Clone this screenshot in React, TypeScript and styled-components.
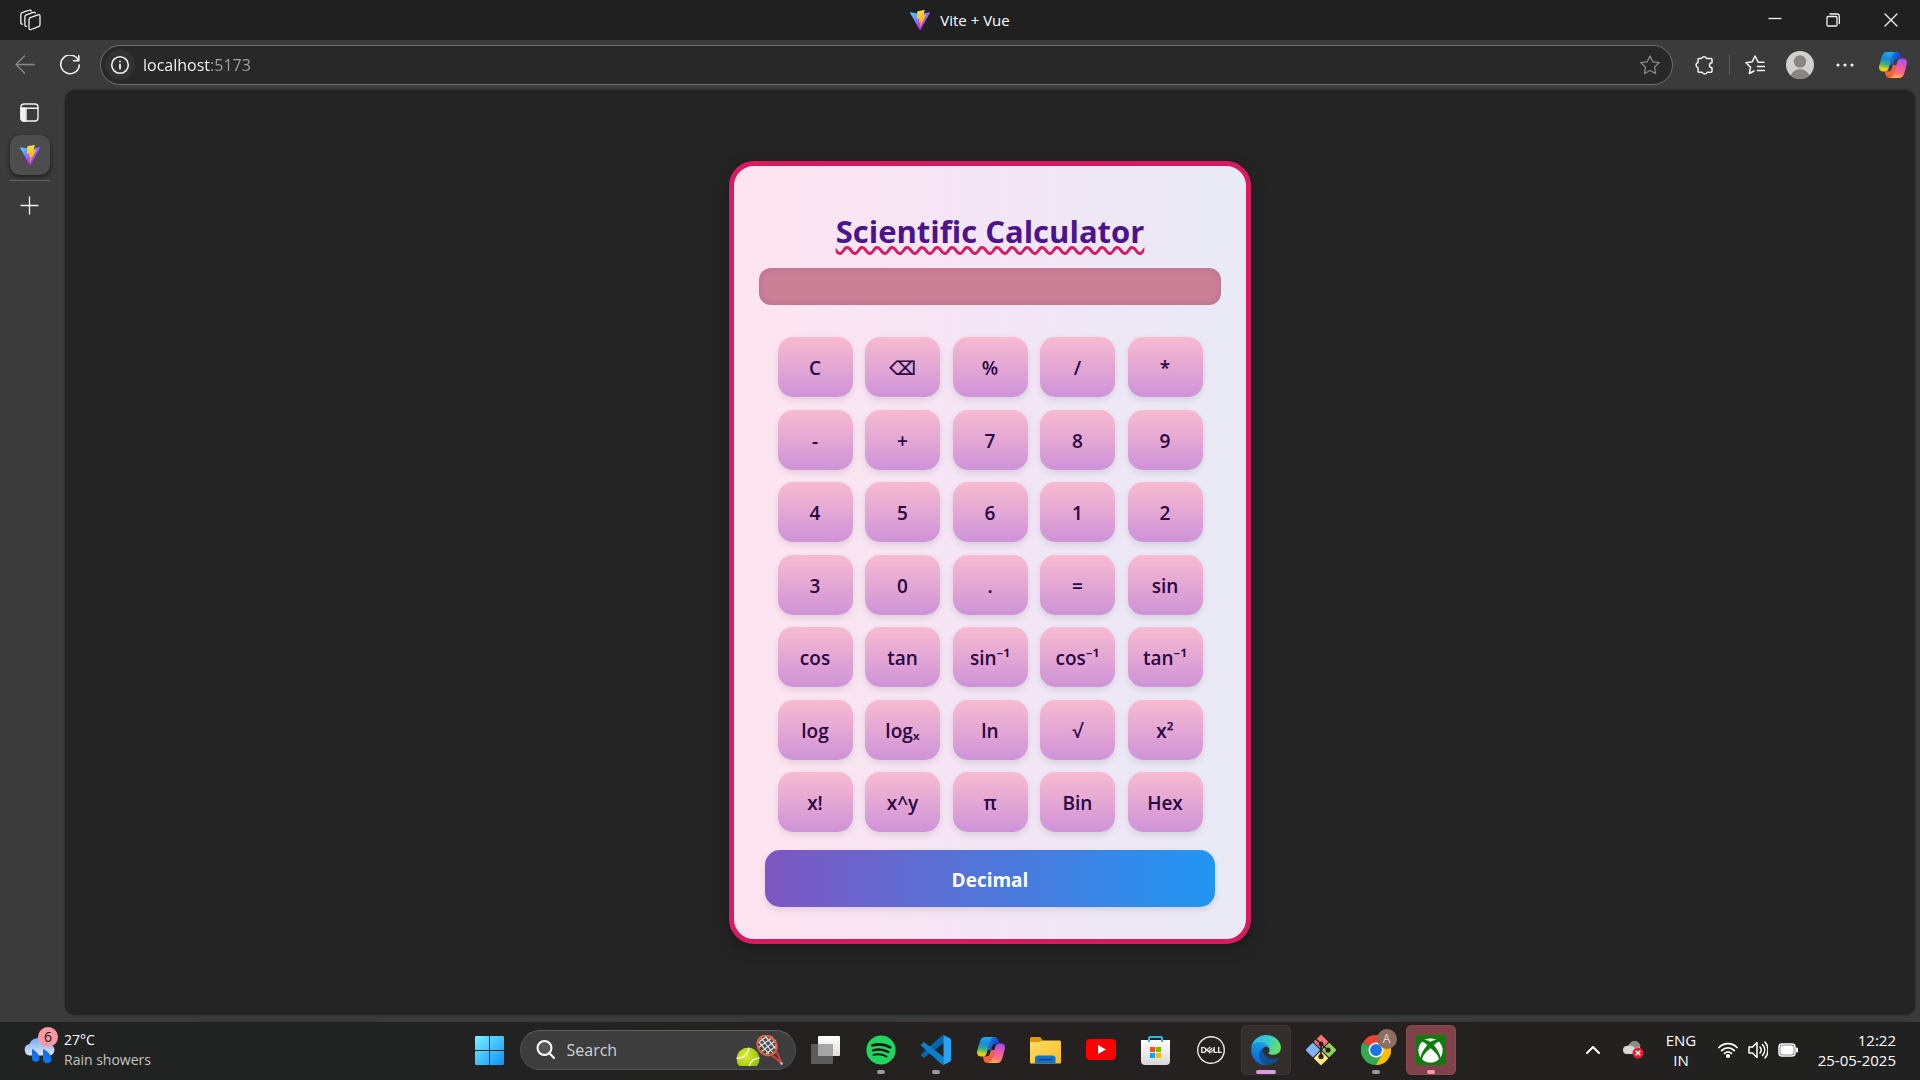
import React, { useId } from "react";
import styled, { createGlobalStyle, css } from "styled-components";
import { SiDell } from "react-icons/si";
import { FaXbox } from "react-icons/fa";

const uiFont = `"Open Sans", "Noto Sans", "DejaVu Sans", sans-serif`;

const GlobalStyle = createGlobalStyle`
  *, *::before, *::after { box-sizing: border-box; }
  body { margin: 0; background: #202020; color: #fff; font-family: ${uiFont}; }
  button, input, output { font-family: inherit; }
  h1, p { margin: 0; }
  svg { display: block; flex: none; }
`;

/* ---------- shared ---------- */

const PlainButton = styled.button`
  display: flex;
  align-items: center;
  justify-content: center;
  padding: 0;
  border: 0;
  background: none;
  color: inherit;
  cursor: pointer;
`;

const IconButton = styled(PlainButton)<{ $width?: number; $dim?: boolean }>`
  flex: none;
  width: ${(p) => p.$width ?? 40}px;
  height: 40px;
  border-radius: 8px;
  color: ${(p) => (p.$dim ? "#8a8a8a" : "#f2f2f2")};
`;

const Line = ({ size = 20, width = 1.3, children }: { size?: number; width?: number; children: React.ReactNode }) => (
  <svg
    width={size}
    height={size}
    viewBox={`0 0 ${size} ${size}`}
    fill="none"
    stroke="currentColor"
    strokeWidth={width}
    strokeLinecap="round"
    strokeLinejoin="round"
    aria-hidden="true"
  >
    {children}
  </svg>
);

const ViteLogo = ({ size = 20 }: { size?: number }) => {
  const id = useId();
  return (
    <svg width={size} height={size} viewBox="0 0 256 257" aria-hidden="true">
      <defs>
        <linearGradient id={`${id}a`} x1="0%" y1="8%" x2="58%" y2="78%">
          <stop offset="0" stopColor="#41d1ff" />
          <stop offset="1" stopColor="#bd34fe" />
        </linearGradient>
        <linearGradient id={`${id}b`} x1="43%" y1="2%" x2="50%" y2="89%">
          <stop offset="0" stopColor="#ffea83" />
          <stop offset="0.08" stopColor="#ffdd35" />
          <stop offset="1" stopColor="#ffa800" />
        </linearGradient>
      </defs>
      <path
        fill={`url(#${id}a)`}
        d="M255.153 37.938 134.897 252.976c-2.483 4.44-8.862 4.466-11.382.048L.875 37.958c-2.746-4.814 1.371-10.646 6.827-9.67l120.385 21.517a6.537 6.537 0 0 0 2.322-.004l117.867-21.483c5.438-.991 9.574 4.796 6.877 9.62Z"
      />
      <path
        fill={`url(#${id}b)`}
        d="M185.432.063 96.44 17.501a3.268 3.268 0 0 0-2.634 3.014l-5.474 92.456a3.268 3.268 0 0 0 3.997 3.378l24.777-5.718c2.318-.535 4.413 1.507 3.936 3.838l-7.361 36.047c-.495 2.426 1.782 4.5 4.151 3.78l15.304-4.649c2.372-.72 4.652 1.36 4.15 3.788l-11.698 56.621c-.732 3.542 3.979 5.473 5.943 2.437l1.313-2.028 72.516-144.72c1.215-2.423-.88-5.186-3.54-4.672l-25.505 4.922c-2.396.462-4.435-1.77-3.759-4.114l16.646-57.705c.677-2.35-1.37-4.583-3.769-4.113Z"
      />
    </svg>
  );
};

const CopilotLogo = () => {
  const id = useId();
  const body = "M8 0h8.500c-2.500.6-3.400 3.300-4.200 6.400L9.900 15.500c-.8 3-2.200 4-4.400 4H4c-3.500 0-4.500-2.700-3.700-6L2.800 4.600C3.700 1.500 5.500 0 8 0Z";
  const fold = "M13.500 0H17c2.800 0 3.700 1.300 4.400 3.600l.9 3.100h-3.400c-2.300 0-3.200.8-3.800 2.800L14 13h-3.500l1.800-7C13 3 13 1 13.500 0Z";
  return (
    <svg width="28" height="26" viewBox="0 0 28 26" aria-hidden="true">
      <defs>
        <linearGradient id={`${id}a`} x1="0.500" y1="0" x2="0.350" y2="1">
          <stop offset="0" stopColor="#1fa8ee" />
          <stop offset="0.350" stopColor="#1a86d8" />
          <stop offset="0.650" stopColor="#3fb37a" />
          <stop offset="0.850" stopColor="#d9d116" />
          <stop offset="1" stopColor="#ffcb00" />
        </linearGradient>
        <linearGradient id={`${id}b`} x1="0.300" y1="1" x2="0.500" y2="0">
          <stop offset="0" stopColor="#a04df2" />
          <stop offset="0.450" stopColor="#ee5aa8" />
          <stop offset="0.750" stopColor="#fb6f83" />
          <stop offset="1" stopColor="#ffb04a" />
        </linearGradient>
        <linearGradient id={`${id}c`} x1="0" y1="0" x2="1" y2="0.500">
          <stop offset="0" stopColor="#1a8be6" />
          <stop offset="1" stopColor="#1b38c4" />
        </linearGradient>
      </defs>
      <path d={fold} fill={`url(#${id}c)`} />
      <path d={fold} fill="#f4633a" transform="rotate(180 14 13)" />
      <path d={body} fill={`url(#${id}a)`} />
      <path d={body} fill={`url(#${id}b)`} transform="rotate(180 14 13)" />
    </svg>
  );
};

/* ---------- browser window ---------- */

const Desktop = styled.div`
  display: flex;
  flex-direction: column;
  min-height: 100vh;
`;

const Browser = styled.div`
  flex: 1;
  display: flex;
  flex-direction: column;
  background: #3b3b3b;
`;

const TitleBar = styled.header`
  display: grid;
  grid-template-columns: 1fr auto 1fr;
  align-items: center;
  height: 40px;
  padding-left: 10px;
  background: #202020;
`;

const WindowTitle = styled.div`
  display: flex;
  align-items: center;
  gap: 10px;
  margin-right: 10px;
  font-size: 15px;
  line-height: 20px;
`;

const WindowControls = styled.div`
  display: flex;
  justify-content: flex-end;
`;

const Toolbar = styled.nav`
  display: flex;
  align-items: center;
  gap: 5px;
  height: 50px;
  padding: 0 4px 0 5px;
`;

const AddressBar = styled.div`
  flex: 1;
  display: flex;
  align-items: center;
  gap: 8px;
  height: 40px;
  margin: 0 6px 0 5px;
  padding: 0 4px;
  border: 1px solid #6e6e6e;
  border-radius: 20px;
  background: #282828;
`;

const SiteInfo = styled(PlainButton)`
  flex: none;
  width: 30px;
  height: 30px;
  border-radius: 50%;
  background: #323232;
  color: #f2f2f2;
`;

const AddressInput = styled.input`
  flex: 1;
  min-width: 0;
  padding: 0;
  border: 0;
  outline: 0;
  font-size: 16px;
  line-height: 24px;
  color: transparent;
  caret-color: #fff;
  background: linear-gradient(90deg, #fff 68px, #a3a3a3 68px);
  background-clip: text;
  -webkit-background-clip: text;
`;

const Separator = styled.span`
  flex: none;
  width: 1px;
  height: 20px;
  background: #5e5e5e;
`;

const Workspace = styled.div`
  flex: 1;
  display: flex;
  padding: 0 5px 6px 0;
`;

const TabStrip = styled.aside`
  flex: none;
  display: flex;
  flex-direction: column;
  gap: 2px;
  width: 65px;
  padding: 3px 15px 0 10px;
`;

const ActiveTab = styled(PlainButton)`
  height: 40px;
  border-radius: 10px;
  background: #4d4d4d;
  box-shadow: 0 2px 5px rgba(0, 0, 0, 0.55);
`;

const TabDivider = styled.hr`
  width: 100%;
  height: 1px;
  margin: 3px 0;
  border: 0;
  background: #636363;
`;

const Page = styled.main`
  flex: 1;
  display: flex;
  align-items: center;
  justify-content: center;
  border-radius: 10px;
  background: #242424;
  box-shadow: 0 0 2px rgba(0, 0, 0, 0.5);
`;

/* ---------- calculator ---------- */

const Card = styled.section`
  display: flex;
  flex-direction: column;
  align-items: center;
  width: 522px;
  padding: 25px 25px 32px;
  border: 5px solid #d81b60;
  border-radius: 25px;
  background: linear-gradient(to right, #ffe4f0, #f3e5f5, #e8eaf6);
  box-shadow: 0 5px 15px rgba(0, 0, 0, 0.3);
`;

const CardTitle = styled.h1`
  margin: 16px 0 13px;
  font-size: 31px;
  line-height: 48px;
  font-weight: 700;
  color: #4a148c;
  text-decoration: underline wavy #d81b60;
  text-decoration-thickness: 3px;
  text-decoration-skip-ink: none;
  text-underline-offset: 3px;
`;

const Display = styled.output`
  align-self: stretch;
  height: 37px;
  border-radius: 12px;
  background: #cc8098;
  box-shadow: inset 0 0 10px rgba(0, 0, 0, 0.12);
`;

const Keypad = styled.div`
  display: grid;
  grid-template-columns: repeat(5, 75px);
  grid-auto-rows: 60px;
  justify-content: space-between;
  align-content: space-between;
  width: 425px;
  min-height: 495px;
  margin: 32px 0 18px;
`;

const keyText = css`
  display: flex;
  align-items: center;
  justify-content: center;
  padding: 2px 0 0;
  border: 0;
  cursor: pointer;
  line-height: 28px;
`;

const Key = styled.button`
  ${keyText}
  border-radius: 15px;
  background: linear-gradient(to bottom, #f8bbd0, #ce93d8);
  box-shadow: 0 3px 6px rgba(0, 0, 0, 0.1);
  font-size: 19px;
  font-weight: 600;
  color: #2a0540;
`;

const ModeButton = styled.button`
  ${keyText}
  width: 450px;
  height: 57px;
  border-radius: 15px;
  background: linear-gradient(to right, #7e57c2, #2196f3);
  box-shadow: 0 3px 6px rgba(0, 0, 0, 0.1);
  font-size: 19px;
  font-weight: 700;
  color: #fff;
`;

const keys = [
  "C", "⌫", "%", "/", "*",
  "-", "+", "7", "8", "9",
  "4", "5", "6", "1", "2",
  "3", "0", ".", "=", "sin",
  "cos", "tan", "sin⁻¹", "cos⁻¹", "tan⁻¹",
  "log", "logₓ", "ln", "√", "x²",
  "x!", "x^y", "π", "Bin", "Hex",
];

const Calculator = () => (
  <Card aria-labelledby="calc-title">
    <CardTitle id="calc-title">Scientific Calculator</CardTitle>
    <Display aria-label="Result" />
    <Keypad>
      {keys.map((k) => (
        <Key key={k} type="button">{k}</Key>
      ))}
    </Keypad>
    <ModeButton type="button">Decimal</ModeButton>
  </Card>
);

/* ---------- taskbar ---------- */

const Taskbar = styled.footer`
  display: grid;
  grid-template-columns: 1fr auto 1fr;
  align-items: center;
  height: 59px;
  padding-bottom: 2px;
  border-top: 1px solid #3a3a3a;
  background: linear-gradient(90deg, #202322, #212221 30%, #252120 55%, #242120 70%, #202120);
`;

const Weather = styled(PlainButton)`
  justify-self: start;
  gap: 9px;
  padding-left: 24px;
`;

const WeatherIcon = styled.span`
  position: relative;
  width: 31px;
  height: 28px;
  padding-top: 2px;
`;

const CountBadge = styled.span`
  position: absolute;
  top: -9px;
  right: -3px;
  width: 20px;
  height: 20px;
  border-radius: 50%;
  background: #ff99a4;
  color: #111;
  font-size: 14px;
  line-height: 20px;
  text-align: center;
`;

const Stack = styled.span<{ $align: string; $size?: number }>`
  display: flex;
  flex-direction: column;
  text-align: ${(p) => p.$align};
  font-size: ${(p) => p.$size ?? 14}px;
  line-height: 20px;
  color: #fff;
`;

const Muted = styled.span`
  color: #c4c4c4;
`;

const Apps = styled.div`
  display: flex;
  align-items: center;
  gap: 5px;
`;

const AppButton = styled(PlainButton)<{ $tone?: "active" | "alert" }>`
  position: relative;
  width: 50px;
  height: 50px;
  border-radius: 6px;
  ${(p) => p.$tone === "active" && "background: #332d2c; box-shadow: inset 0 0 0 1px #3d3836;"}
  ${(p) => p.$tone === "alert" && "background: #7f4248; box-shadow: inset 0 0 0 1px #8a4c52;"}
`;

const Indicator = styled.span<{ $width?: number; $color?: string }>`
  position: absolute;
  bottom: 1px;
  left: 50%;
  width: ${(p) => p.$width ?? 8}px;
  height: 4px;
  border-radius: 2px;
  background: ${(p) => p.$color ?? "#9a9a9a"};
  transform: translateX(-50%);
`;

const ProfileBadge = styled.span`
  position: absolute;
  top: 4px;
  right: 4px;
  width: 20px;
  height: 20px;
  border-radius: 50%;
  background: #8d6e63;
  color: #e4dcd9;
  font-size: 12px;
  line-height: 20px;
  text-align: center;
`;

const SearchBox = styled.label`
  display: flex;
  align-items: center;
  width: 276px;
  height: 40px;
  padding: 0 12px 0 15px;
  border: 1px solid #4e4e4e;
  border-top-color: #606060;
  border-radius: 20px;
  background: #3d3d3d;
`;

const SearchInput = styled.input`
  flex: 1;
  min-width: 0;
  padding: 0 0 0 11px;
  border: 0;
  outline: 0;
  background: none;
  color: #fff;
  font-size: 16px;
  line-height: 24px;
  &::placeholder { color: #d2d2d2; opacity: 1; }
`;

const Tray = styled.div`
  display: flex;
  align-items: center;
  justify-content: flex-end;
  padding-right: 24px;
`;

const TrayButton = styled(PlainButton)<{ $width: number; $end?: boolean }>`
  width: ${(p) => p.$width}px;
  height: 50px;
  gap: 10px;
  justify-content: ${(p) => (p.$end ? "flex-end" : "center")};
`;

const XboxTile = styled.span`
  display: flex;
  align-items: center;
  justify-content: center;
  width: 30px;
  height: 30px;
  border-radius: 2px;
  background: #107c10;
  color: #fff;
`;

const WeatherGlyph = () => (
  <svg width="31" height="26" viewBox="0 0 31 26" aria-hidden="true">
    <defs>
      <linearGradient id="cloud" x1="0" y1="0" x2="0" y2="1">
        <stop offset="0" stopColor="#7aa8f5" />
        <stop offset="1" stopColor="#dbe7fb" />
      </linearGradient>
      <linearGradient id="drop" x1="0" y1="0" x2="0" y2="1">
        <stop offset="0" stopColor="#1b66d8" />
        <stop offset="1" stopColor="#0a7bff" />
      </linearGradient>
    </defs>
    <path fill="url(#cloud)" d="M6 17.500a5.800 5.800 0 0 1-.500-11.500C7 2 10.500 0 15 0c5 0 9 3 10 6.500A5.500 5.500 0 0 1 25 17.500Z" />
    <path fill="url(#drop)" d="M8 11c4 2 7.500 5.500 7.500 9a3.700 3.700 0 0 1-7.500 0Z" />
    <path fill="url(#drop)" d="M19 11c4 2 8.500 5.500 8.500 10a4.200 4.200 0 0 1-8.500 0Z" />
  </svg>
);

const StartGlyph = () => (
  <svg width="29" height="29" viewBox="0 0 29 29" aria-hidden="true">
    <defs>
      <linearGradient id="start" gradientUnits="userSpaceOnUse" x1="0" y1="0" x2="29" y2="29">
        <stop offset="0" stopColor="#79f0ff" />
        <stop offset="1" stopColor="#0a94fb" />
      </linearGradient>
    </defs>
    <path fill="url(#start)" d="M1 0h13v14H0V1a1 1 0 0 1 1-1ZM15 0h13a1 1 0 0 1 1 1v13H15ZM0 15h14v14H1a1 1 0 0 1-1-1ZM15 15h14v13a1 1 0 0 1-1 1H15Z" />
  </svg>
);

const TennisGlyph = () => (
  <svg width="47" height="31" viewBox="0 0 47 31" aria-hidden="true">
    <defs>
      <radialGradient id="ball" cx="0.400" cy="0.350" r="0.700">
        <stop offset="0" stopColor="#dcf02c" />
        <stop offset="1" stopColor="#8fb80a" />
      </radialGradient>
      <clipPath id="ballClip"><circle cx="12" cy="24" r="11.500" /></clipPath>
    </defs>
    <g clipPath="url(#ballClip)">
      <circle cx="12" cy="24" r="11.500" fill="url(#ball)" />
      <path d="M0 23c7 1 12-3 13-11M13 32c1-6 5-9 12-9" fill="none" stroke="#f3fae0" strokeWidth="1.500" />
    </g>
    <g fill="none">
      <ellipse cx="31" cy="10.500" rx="10.500" ry="9" fill="#4a4a4a" transform="rotate(50 31 10.500)" />
      <path d="M23 7l10 12M25 3l12 15M29 1l11 13M34 1l6 7M40 5L25 17M37 2L22 13M41 10l-11 9M31 1l-8 6" stroke="#e2e2e2" strokeWidth="1.200" />
      <ellipse cx="31" cy="10.500" rx="10.500" ry="9" strokeWidth="2" stroke="#e8603e" transform="rotate(50 31 10.500)" />
      <path d="M35 20l10 7M40 15l5 12" strokeWidth="1.600" stroke="#e3402f" />
      <path d="M43 25l2.500 3.500" strokeWidth="3" stroke="#e3402f" />
    </g>
    <circle cx="45.500" cy="28.500" r="1.400" fill="#b9a8e6" />
  </svg>
);

const TaskViewGlyph = () => (
  <svg width="29" height="28" viewBox="0 0 29 28" aria-hidden="true">
    <defs>
      <linearGradient id="tv" x1="0" y1="0" x2="0" y2="1">
        <stop offset="0" stopColor="#ffffff" />
        <stop offset="1" stopColor="#dedede" />
      </linearGradient>
    </defs>
    <rect x="0" y="8" width="22" height="20" rx="1" fill="#5c5c5c" />
    <rect x="7" y="0" width="22" height="20" rx="1" fill="url(#tv)" />
    <rect x="7" y="8" width="15" height="12" fill="#a6a6a6" />
  </svg>
);

const SpotifyGlyph = () => (
  <svg width="30" height="30" viewBox="0 0 30 30" aria-hidden="true">
    <circle cx="15" cy="15" r="14.600" fill="#1ed760" />
    <g fill="none" stroke="#191414" strokeLinecap="round">
      <path d="M6.500 10.400c6-1.600 12.600-1 17.700 2" strokeWidth="2.800" />
      <path d="M7 15.300c5.300-1.400 10.800-.8 15.300 1.800" strokeWidth="2.300" />
      <path d="M7.500 19.800c4.500-1 9-.5 13 1.700" strokeWidth="1.900" />
    </g>
  </svg>
);

const CodeGlyph = () => (
  <svg width="30" height="30" viewBox="0 0 100 100" aria-hidden="true">
    <path fill="#0065a9" d="M75 27.300 12.200 75a4.200 4.200 0 0 1-5.300-.2l-5.500-5a4.200 4.200 0 0 1 0-6.200L68.800 2.100 80 10Z" />
    <path fill="#0b7fcb" d="M75 72.700 12.200 25a4.200 4.200 0 0 0-5.300.2l-5.500 5a4.200 4.200 0 0 0 0 6.200L68.800 97.900 80 90Z" />
    <path fill="#26a3f2" d="M75.900 99.100a6.200 6.200 0 0 1-7.100-1.200c2.300 2.300 6.200.7 6.200-2.600V4.700c0-3.300-3.900-4.900-6.200-2.600a6.200 6.200 0 0 1 7.100-1.200l20.600 9.900a6.200 6.200 0 0 1 3.500 5.600v67.200a6.200 6.200 0 0 1-3.500 5.600Z" />
  </svg>
);

const FolderGlyph = () => (
  <svg width="31" height="27" viewBox="0 0 31 27" aria-hidden="true">
    <defs>
      <linearGradient id="fold" x1="0" y1="0" x2="1" y2="1">
        <stop offset="0" stopColor="#ffdc6b" />
        <stop offset="1" stopColor="#f9bd1f" />
      </linearGradient>
    </defs>
    <path fill="#dc9a06" d="M0 1.500A1.500 1.500 0 0 1 1.500 0H9c1 0 1.500.3 2 .9L13 4v6H0Z" />
    <path fill="url(#fold)" d="M0 5h9.500L13 3.500h16.500A1.500 1.500 0 0 1 31 5v20.500a1 1 0 0 1-1 1H1a1 1 0 0 1-1-1Z" />
    <path fill="#1172c9" d="M5 21.500a3 3 0 0 1 3-3h14.500a3 3 0 0 1 3 3v5H5Z" />
    <path stroke="#0b3f78" strokeWidth="1.200" d="M9 22.500h13" />
  </svg>
);

const YouTubeGlyph = () => (
  <svg width="30" height="22" viewBox="0 0 30 22" aria-hidden="true">
    <rect width="30" height="21" rx="4" fill="#f00" />
    <path fill="#fff" d="M12 6v9l8-4.500Z" />
  </svg>
);

const StoreGlyph = () => (
  <svg width="29" height="29" viewBox="0 0 29 29" aria-hidden="true">
    <defs>
      <linearGradient id="bag" x1="0" y1="0" x2="0" y2="1">
        <stop offset="0" stopColor="#ffffff" />
        <stop offset="1" stopColor="#d8d8d8" />
      </linearGradient>
    </defs>
    <path fill="none" stroke="#2fb6ee" strokeWidth="2" d="M8 6V2a1 1 0 0 1 1-1h11a1 1 0 0 1 1 1v4" />
    <path fill="url(#bag)" d="M0 4h29v21a4 4 0 0 1-4 4H4a4 4 0 0 1-4-4Z" />
    <path fill="none" stroke="#2fb6ee" strokeWidth="2" d="M8 3v3M21 3v3" />
    <path fill="#f25022" d="M9 11h5v5H9z" />
    <path fill="#7fba00" d="M15 11h5v5h-5z" />
    <path fill="#00a4ef" d="M9 17h5v5H9z" />
    <path fill="#ffb900" d="M15 17h5v5h-5z" />
  </svg>
);

const EdgeGlyph = () => (
  <svg width="30" height="30" viewBox="0 0 256 258" aria-hidden="true">
    <defs>
      <linearGradient id="edgeA" x1="0.200" y1="0" x2="1" y2="0.300">
        <stop offset="0" stopColor="#0c59a4" />
        <stop offset="1" stopColor="#114a8b" />
      </linearGradient>
      <linearGradient id="edgeB" x1="0.600" y1="0.100" x2="0.300" y2="1">
        <stop offset="0" stopColor="#1b9de2" />
        <stop offset="0.500" stopColor="#127ddb" />
        <stop offset="1" stopColor="#0a62c9" />
      </linearGradient>
      <linearGradient id="edgeC" x1="0" y1="0.300" x2="1" y2="0.600">
        <stop offset="0" stopColor="#2bb8e8" />
        <stop offset="0.500" stopColor="#36c9d2" />
        <stop offset="1" stopColor="#6be35a" />
      </linearGradient>
    </defs>
    <path fill="url(#edgeA)" d="M235.680 195.460a93.730 93.730 0 0 1-10.540 4.710 101.870 101.870 0 0 1-35.900 6.460c-47.320 0-88.540-32.550-88.540-74.320A31.480 31.480 0 0 1 117.130 105c-42.800 1.800-53.800 46.400-53.800 72.530 0 73.880 68.090 79 82.760 79 7.910 0 19.840-2.300 27-4.560l1.310-.440a128.340 128.340 0 0 0 66.600-50.430 4 4 0 0 0-5.320-5.640Z" />
    <path fill="url(#edgeB)" d="M105.730 246.600A79.200 79.200 0 0 1 83 225.300a80.720 80.720 0 0 1 29.520-120c3.120-1.470 8.450-4.130 15.540-4a32.350 32.350 0 0 1 25.690 13 31.880 31.880 0 0 1 6.360 18.660c0-.210 24.460-79.600-80-79.600-43.900 0-80 41.660-80 78.210a130.150 130.150 0 0 0 12.110 56 128 128 0 0 0 156.380 67.110 75.550 75.550 0 0 1-62.780-8Z" />
    <path fill="url(#edgeC)" d="M152.250 148.860c-.810 1.050-3.300 2.500-3.300 5.660 0 2.610 1.700 5.120 4.720 7.230 14.380 10 41.490 8.680 41.560 8.680a59.560 59.560 0 0 0 30.270-8.350A61.380 61.380 0 0 0 256 109.160c.260-22.410-8-37.310-11.340-43.910C223.460 23.780 177.720 0 128 0A128 128 0 0 0 0 126.200c.480-36.540 36.800-66.050 80-66.050 3.500 0 23.460.340 42 10.070 16.340 8.580 24.900 18.940 30.850 29.210 6.180 10.670 7.280 24.150 7.280 29.520s-2.740 13.330-7.880 19.910Z" />
  </svg>
);

const GitGlyph = () => (
  <svg width="32" height="32" viewBox="0 0 32 32" aria-hidden="true">
    <g transform="rotate(45 16 16)">
      <rect x="5" y="5" width="10.400" height="10.400" rx="1" fill="#f07178" />
      <rect x="16.600" y="5" width="10.400" height="10.400" rx="1" fill="#8ed25d" />
      <rect x="5" y="16.600" width="10.400" height="10.400" rx="1" fill="#80b3ff" />
      <rect x="16.600" y="16.600" width="10.400" height="10.400" rx="1" fill="#ffe680" />
    </g>
    <g fill="#2a1d16" stroke="#2a1d16" strokeWidth="1.600">
      <path fill="none" d="M11 5l5 5v13M16 10l7 6" />
      <circle cx="16" cy="10" r="1.600" />
      <circle cx="23" cy="16" r="1.800" />
      <circle cx="16" cy="22.500" r="1.800" />
    </g>
  </svg>
);

const ChromeGlyph = () => (
  <svg width="30" height="30" viewBox="0 0 48 48" aria-hidden="true">
    <path fill="#ea4335" d="M24 24 3.200 12A24 24 0 0 1 44.800 12Z" />
    <path fill="#fbbc04" d="M24 24 44.800 12A24 24 0 0 1 24 48Z" />
    <path fill="#34a853" d="M24 24v24A24 24 0 0 1 3.200 12Z" />
    <path fill="#ea4335" d="M24 12h20.800L40 8H20Z" />
    <path fill="#fbbc04" d="M44.800 12H24l10.400 18L24 48a24 24 0 0 0 20.800-36Z" />
    <path fill="#34a853" d="M3.200 12l10.400 18A12 12 0 0 0 34.400 30L24 48A24 24 0 0 1 3.200 12Z" />
    <circle cx="24" cy="24" r="12" fill="#fff" />
    <circle cx="24" cy="24" r="9.500" fill="#1a73e8" />
  </svg>
);

const OneDriveGlyph = () => (
  <svg width="21" height="18" viewBox="0 0 21 18" aria-hidden="true">
    <path fill="#8d8d8d" d="M5 5.500C6 2 8.500 0 11.500 0c3 0 5.500 2 6 5.500L14 9Z" />
    <path fill="#d8d8d8" d="M4 13a4 4 0 0 1 0-8c3-1 6 0 8 2l5-1v7Z" />
    <circle cx="15" cy="12" r="5.500" fill="#e01f33" />
    <path stroke="#fff" strokeWidth="1.400" d="M12.700 9.700l4.600 4.600M17.300 9.700l-4.600 4.600" />
  </svg>
);

/* ---------- page ---------- */

export default function App() {
  return (
    <Desktop>
      <GlobalStyle />
      <Browser>
        <TitleBar>
          <IconButton type="button" aria-label="Workspaces">
            <Line size={22}>
              <path d="M11.200 8.600 19 5.800c1.200-.4 2 .1 2 1.300v8.400c0 1-.5 1.700-1.500 2.100L12 20.500c-1.200.4-2-.1-2-1.400v-8.400c0-1 .3-1.700 1.200-2.100Z" />
              <path d="M7.500 17.300c-1 .1-1.600-.5-1.600-1.500V8c0-1 .5-1.700 1.400-2.100l7-2.600c1-.4 1.800 0 2 .9" />
              <path d="M3.500 15.200c-1 .1-1.700-.5-1.700-1.500V5.800c0-1 .5-1.700 1.400-2.100l7-2.500c1-.4 1.800 0 2 .8" />
            </Line>
          </IconButton>
          <WindowTitle>
            <ViteLogo />
            <span>Vite + Vue</span>
          </WindowTitle>
          <WindowControls>
            <IconButton type="button" $width={58} aria-label="Minimize">
              <Line size={14}><path d="M.5 5.500h13" strokeLinecap="butt" /></Line>
            </IconButton>
            <IconButton type="button" $width={58} aria-label="Restore">
              <Line size={14}>
                <rect x="1" y="3.500" width="10" height="9.500" rx="1" />
                <path d="M4 1h7.500A2 2 0 0 1 13.300 3v7.500" />
              </Line>
            </IconButton>
            <IconButton type="button" $width={58} aria-label="Close">
              <Line size={14}><path d="M1 1l12 12M13 1 1 13" /></Line>
            </IconButton>
          </WindowControls>
        </TitleBar>

        <Toolbar aria-label="Browser toolbar">
          <IconButton type="button" $dim aria-label="Back">
            <Line><path d="M19.500 9.500H1M9.500 1 1 9.500 9.500 18" /></Line>
          </IconButton>
          <IconButton type="button" aria-label="Reload">
            <Line width={1.600}><path d="M18.500 5.500A9.300 9.300 0 1 0 19.300 10M18.800.8v5h-5.300" /></Line>
          </IconButton>
          <AddressBar>
            <SiteInfo type="button" aria-label="Site information">
              <Line width={1.600}>
                <circle cx="10" cy="10" r="8.300" />
                <path d="M10 9.500v4M10 6.500v.1" strokeWidth="1.800" />
              </Line>
            </SiteInfo>
            <AddressInput aria-label="Address" defaultValue="localhost:5173" spellCheck={false} />
            <IconButton type="button" $width={36} $dim aria-label="Add to favorites">
              <Line><path d="M10 1l2.800 5.800 6.300.9-4.600 4.400 1.100 6.400L10 15.500l-5.600 3 1.100-6.400L.9 7.700l6.300-.9Z" /></Line>
            </IconButton>
          </AddressBar>
          <IconButton type="button" aria-label="Extensions">
            <Line width={1.500}>
              <path d="M5 3.500h2.600a2.700 2.700 0 0 1 5 0H17a1 1 0 0 1 1 1v3.200a2.500 2.500 0 0 0 0 5v3.600a1 1 0 0 1-1 1h-3.800a2.700 2.700 0 0 1-5 0H5a1 1 0 0 1-1-1v-3.600a2.700 2.700 0 0 1 0-5.200V4.500a1 1 0 0 1 1-1Z" />
            </Line>
          </IconButton>
          <Separator />
          <IconButton type="button" aria-label="Favorites">
            <Line width={1.500}>
              <path d="M19 7.200h-5.800L10 1 7.200 6.800.9 7.700l4.600 4.400-1.100 6.400L9 16M12.500 11.500H19.500M12.500 15.500h7" />
            </Line>
          </IconButton>
          <IconButton type="button" aria-label="Profile">
            <svg width="28" height="28" viewBox="0 0 28 28" aria-hidden="true">
              <clipPath id="face"><circle cx="14" cy="14" r="14" /></clipPath>
              <circle cx="14" cy="14" r="14" fill="#d2d0ce" />
              <g clipPath="url(#face)" fill="#8a8583">
                <circle cx="14" cy="10.500" r="6.200" />
                <circle cx="14" cy="28" r="10" />
              </g>
            </svg>
          </IconButton>
          <IconButton type="button" aria-label="Settings and more">
            <svg width="18" height="4" viewBox="0 0 18 4" fill="currentColor" aria-hidden="true">
              <circle cx="2" cy="2" r="1.600" /><circle cx="9" cy="2" r="1.600" /><circle cx="16" cy="2" r="1.600" />
            </svg>
          </IconButton>
          <IconButton type="button" $width={46} aria-label="Copilot">
            <CopilotLogo />
          </IconButton>
        </Toolbar>

        <Workspace>
          <TabStrip>
            <IconButton type="button" aria-label="Tab actions">
              <Line width={1.400}>
                <rect x="1" y="1" width="17" height="17" rx="3" />
                <path d="M1 5.200h17M6 5v13" />
                <path d="M1 5.200h4V18H4a3 3 0 0 1-3-3Z" fill="currentColor" />
              </Line>
            </IconButton>
            <ActiveTab type="button" aria-label="Vite + Vue">
              <ViteLogo />
            </ActiveTab>
            <TabDivider />
            <IconButton type="button" aria-label="New tab">
              <Line><path d="M9.500 1v17M1 9.500h17" /></Line>
            </IconButton>
          </TabStrip>
          <Page>
            <Calculator />
          </Page>
        </Workspace>
      </Browser>

      <Taskbar>
        <Weather type="button">
          <WeatherIcon>
            <WeatherGlyph />
            <CountBadge>6</CountBadge>
          </WeatherIcon>
          <Stack $align="left">
            <span>27°C</span>
            <Muted>Rain showers</Muted>
          </Stack>
        </Weather>

        <Apps>
          <AppButton type="button" aria-label="Start"><StartGlyph /></AppButton>
          <SearchBox>
            <Line width={2}>
              <circle cx="8.500" cy="8" r="7" fill="#575757" />
              <path d="M13.500 13.200l4.500 4.800" />
            </Line>
            <SearchInput type="search" placeholder="Search" aria-label="Search" />
            <TennisGlyph />
          </SearchBox>
          <AppButton type="button" aria-label="Task view"><TaskViewGlyph /></AppButton>
          <AppButton type="button" aria-label="Spotify"><SpotifyGlyph /><Indicator /></AppButton>
          <AppButton type="button" aria-label="Visual Studio Code"><CodeGlyph /><Indicator /></AppButton>
          <AppButton type="button" aria-label="Copilot"><CopilotLogo /></AppButton>
          <AppButton type="button" aria-label="File Explorer"><FolderGlyph /></AppButton>
          <AppButton type="button" aria-label="YouTube"><YouTubeGlyph /></AppButton>
          <AppButton type="button" aria-label="Microsoft Store"><StoreGlyph /></AppButton>
          <AppButton type="button" aria-label="Dell"><SiDell size={28} color="#ececec" /></AppButton>
          <AppButton type="button" $tone="active" aria-label="Microsoft Edge">
            <EdgeGlyph /><Indicator $width={20} $color="#d99be0" />
          </AppButton>
          <AppButton type="button" aria-label="Git"><GitGlyph /></AppButton>
          <AppButton type="button" aria-label="Google Chrome">
            <ChromeGlyph /><ProfileBadge>A</ProfileBadge><Indicator />
          </AppButton>
          <AppButton type="button" $tone="alert" aria-label="Xbox">
            <XboxTile><FaXbox size={25} /></XboxTile><Indicator $color="#ff99a4" />
          </AppButton>
        </Apps>

        <Tray>
          <TrayButton type="button" $width={38} aria-label="Show hidden icons">
            <Line size={14} width={2}><path d="M1 10l6-6 6 6" /></Line>
          </TrayButton>
          <TrayButton type="button" $width={42} aria-label="OneDrive"><OneDriveGlyph /></TrayButton>
          <TrayButton type="button" $width={54}>
            <Stack $align="center" $size={15}><span>ENG</span><span>IN</span></Stack>
          </TrayButton>
          <TrayButton type="button" $width={100} aria-label="Network, volume and battery">
            <Line width={1.800}>
              <path d="M1 7.500a12.500 12.500 0 0 1 18 0M3.800 10.500a8.700 8.700 0 0 1 12.400 0M6.600 13.300a4.800 4.800 0 0 1 6.800 0" />
              <circle cx="10" cy="16" r="1.200" fill="currentColor" />
            </Line>
            <Line width={1.500}>
              <path d="M1 7v6h3.500L9 17.500v-15L4.500 7ZM12 7c1.500 1.800 1.500 4.200 0 6M14.500 4.500c3 3.300 3 7.700 0 11M17 2c4 4.500 4 11.500 0 16" />
            </Line>
            <Line width={1.500}>
              <rect x="1" y="4" width="16" height="12" rx="3" />
              <rect x="3" y="6" width="12" height="8" rx="1" fill="currentColor" />
              <path d="M19 8.500v3" strokeWidth="2" />
            </Line>
          </TrayButton>
          <TrayButton type="button" $width={88} $end>
            <Stack $align="right" $size={15}><span>12:22</span><span>25-05-2025</span></Stack>
          </TrayButton>
        </Tray>
      </Taskbar>
    </Desktop>
  );
}
